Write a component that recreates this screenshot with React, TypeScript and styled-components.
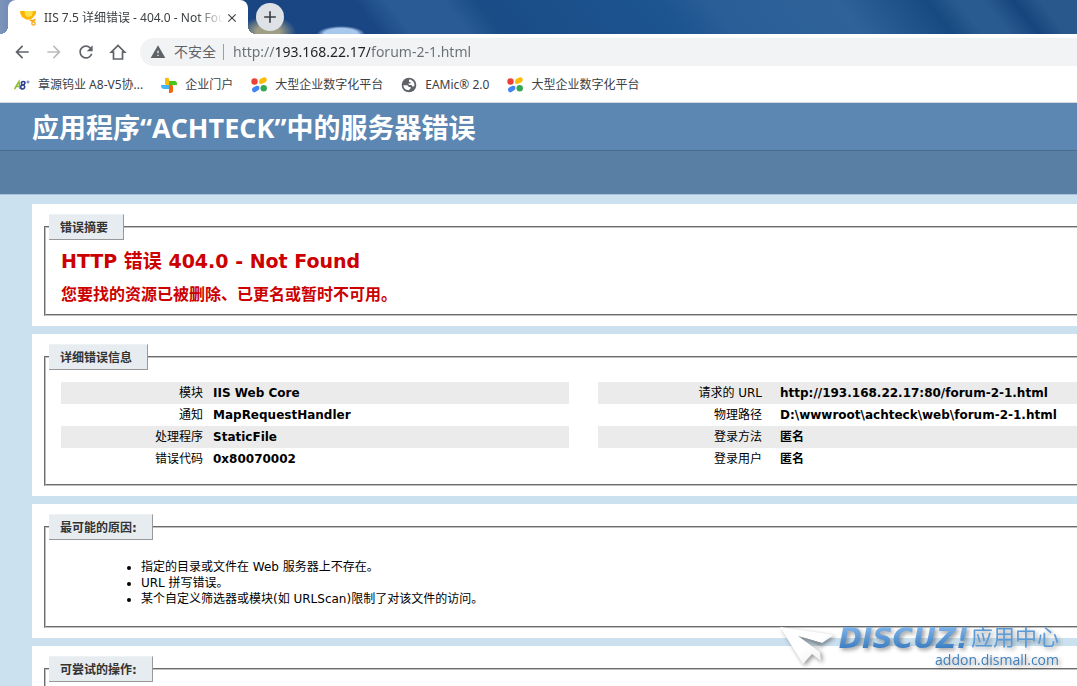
import React from "react";
import styled, { createGlobalStyle } from "styled-components";
import { MdAdd, MdArrowBack, MdArrowForward, MdClose, MdRefresh, MdWarning } from "react-icons/md";

const uiFont = `"Noto Sans", "Noto Sans CJK SC", sans-serif`;
const pageFont = `"DejaVu Sans", "Noto Sans CJK SC", sans-serif`;

const GlobalStyle = createGlobalStyle`
  * { box-sizing: border-box; }
  html, body { height: 100%; }
  #root { height: 100%; }
  body {
    margin: 0;
    overflow: hidden;
    background: #cbe1ef;
    color: #000;
    font: 12px/16px ${pageFont};
  }
`;

const Window = styled.div`
  position: relative;
  min-height: 100%;
  overflow: hidden;
`;

const TabStrip = styled.div`
  display: flex;
  align-items: flex-start;
  height: 34px;
  padding-left: 8px;
  background:
    radial-gradient(ellipse 28px 16px at 268px 32px, #a09d85 40%, transparent),
    radial-gradient(ellipse 24px 8px at 341px 34px, #a9c8ee 70%, transparent),
    linear-gradient(90deg, #7d94bb 0, #6683b0 20px, transparent 60px),
    linear-gradient(52deg, #17437f 0, #1a4784 300px, #2a5b94 325px, #2a5b94 370px, #1a4c86 395px, #1c5590 540px, #2a5e97 580px, #2e6298 680px, #174a80 751px, #2a5b90 775px, #2a5b90 795px, #16457d 819px, #29588c 840px);
`;

const Tab = styled.div`
  position: relative;
  display: flex;
  align-items: center;
  width: 240px;
  height: 34px;
  padding: 1px 8px 0 12px;
  background: #fff;
  border-radius: 8px 8px 0 0;
  &::before,
  &::after {
    content: "";
    position: absolute;
    bottom: 0;
    width: 8px;
    height: 8px;
  }
  &::before {
    right: 100%;
    background: radial-gradient(circle at 0 0, transparent 8px, #fff 8px);
  }
  &::after {
    left: 100%;
    background: radial-gradient(circle at 100% 0, transparent 8px, #fff 8px);
  }
`;

const TabTitle = styled.span`
  flex: 1;
  margin-left: 8px;
  overflow: hidden;
  white-space: nowrap;
  color: #3c4043;
  font: 12px/18px ${uiFont};
  mask-image: linear-gradient(90deg, #000 85%, transparent);
`;

const IconButton = styled.button<{ $size?: number; $fill?: string; $color?: string }>`
  display: flex;
  flex: none;
  align-items: center;
  justify-content: center;
  width: ${(p) => p.$size ?? 32}px;
  height: ${(p) => p.$size ?? 32}px;
  padding: 0;
  border: 0;
  border-radius: 50%;
  background: ${(p) => p.$fill ?? "transparent"};
  color: ${(p) => p.$color ?? "#5f6368"};
`;

const NewTab = styled(IconButton)`
  margin: 3px 0 0 8px;
`;

const Toolbar = styled.div`
  display: flex;
  align-items: center;
  height: 36px;
  padding-left: 6px;
  background: #fff;
`;

const AddressBar = styled.label`
  display: flex;
  flex: 1;
  align-items: center;
  height: 28px;
  margin-left: 6px;
  padding-left: 10px;
  border-radius: 14px 0 0 14px;
  background: #f1f3f4;
  color: #5f6368;
  font: 14px/20px ${uiFont};
`;

const Security = styled.span`
  margin-left: 8px;
  padding-right: 7px;
  border-right: 1px solid #9aa0a6;
  line-height: 16px;
`;

const UrlInput = styled.input`
  flex: 1;
  min-width: 0;
  margin-left: 9px;
  padding: 0;
  border: 0;
  outline: 0;
  background: linear-gradient(90deg, #6b6f74 43px, #202124 43px, #202124 137px, #6b6f74 137px);
  background-clip: text;
  -webkit-text-fill-color: transparent;
  font: inherit;
`;

const Bookmarks = styled.nav`
  display: flex;
  align-items: center;
  gap: 18px;
  height: 33px;
  padding: 0 14px 3px;
  border-bottom: 1px solid #d5d8dc;
  background: #fff;
`;

const Bookmark = styled.a`
  display: flex;
  align-items: center;
  gap: 8px;
  color: #3c4043;
  font: 12px/18px ${uiFont};
  text-decoration: none;
  white-space: nowrap;
  svg { flex: none; }
`;

const Header = styled.header`
  height: 48px;
  padding-left: 32px;
  border-bottom: 1px solid #4a6c8e;
  background: #5c87b2;
`;

const Title = styled.h1`
  margin: 0;
  color: #fff;
  font: bold 27px/50px "Open Sans", "Noto Sans CJK SC", sans-serif;
  white-space: nowrap;
`;

const SubHeader = styled.div`
  height: 44px;
  border-bottom: 1px solid #a9c1d8;
  background: #5a7fa5;
`;

const Content = styled.main`
  display: flex;
  flex-direction: column;
  gap: 8px;
  padding: 9px 0 0 32px;
`;

const Card = styled.section`
  padding: 10px 0 10px 12px;
  background: #fff;
`;

const Group = styled.fieldset<{ $bottom: number }>`
  min-width: 0;
  margin: 0;
  padding: 0 0 ${(p) => p.$bottom}px 3px;
  border: 2px groove #c0c0c0;
  border-right: 0;
`;

const Legend = styled.legend`
  padding: 5px 15px 3px 11px;
  border: 1px solid;
  border-color: #edf2f5 #999 #999;
  border-left: 0;
  background: #e6ecf0;
  color: #333;
  font-weight: bold;
`;

const ErrorTitle = styled.h2`
  margin: 9px 0 0 12px;
  color: #c00;
  font: bold 19px/24px ${pageFont};
`;

const ErrorText = styled.h3`
  margin: 10px 0 0 12px;
  color: #c00;
  font: bold 16px/24px ${pageFont};
`;

const Tables = styled.div`
  display: grid;
  grid-template-columns: 50% 50%;
  column-gap: 29px;
  margin: 12px 0 0 12px;
  overflow: hidden;
`;

const Details = styled.table<{ $label: number; $gap: number }>`
  width: 100%;
  border-collapse: collapse;
  white-space: nowrap;
  tr { height: 22px; }
  tr:nth-child(odd) { background: #ebebeb; }
  th {
    width: ${(p) => p.$label}px;
    padding: 0;
    font-weight: normal;
    text-align: right;
  }
  td {
    padding: 0 0 0 ${(p) => p.$gap}px;
    font-weight: bold;
  }
`;

const Causes = styled.ul`
  margin: 19px 0 0;
  padding-left: 92px;
`;

const Watermark = styled.aside`
  position: absolute;
  top: 622px;
  right: 18px;
  display: flex;
  align-items: flex-start;
  gap: 3px;
  filter: drop-shadow(2px 2px 2px rgba(0, 0, 0, 0.4));
`;

const Brand = styled.div`
  display: flex;
  flex-direction: column;
  align-items: flex-end;
`;

const BrandName = styled.div`
  display: flex;
  align-items: center;
  height: 30px;
  white-space: nowrap;
`;

const Logotype = styled.span`
  margin-right: 2px;
  padding-top: 4px;
  background: linear-gradient(#80b4e8 20%, #3f80c4 80%);
  background-clip: text;
  -webkit-text-fill-color: transparent;
  font: italic bold 28px/30px "DejaVu Sans", sans-serif;
`;

const BrandSuffix = styled.span`
  padding-bottom: 4px;
  color: #5b9bd8;
  font: 22px/30px "Noto Sans CJK SC", sans-serif;
`;

const BrandSite = styled.span`
  color: #3f7fbd;
  font: 14px/16px "Open Sans", sans-serif;
`;

const Trophy = () => (
  <svg width="16" height="16" viewBox="0 0 16 16" aria-hidden="true">
    <path d="M0 1h16v2.500L13.500 7 11 9.500H6L2 7Q0 4 0 1" fill="#ffb400" />
    <path d="M4.500 1h8.500l-1 4.500-4 2-3-2z" fill="#ffdf4a" />
    <path d="M9 10h3.500l3-1.500v2L12 12z" fill="#ffa000" />
    <circle cx="13.500" cy="13.500" r="1.700" fill="#fff6dc" stroke="#f7a41d" strokeWidth="1.200" />
  </svg>
);

const Home = () => (
  <svg width="20" height="20" viewBox="0 0 20 20" fill="none" stroke="currentColor" strokeWidth="1.700" aria-hidden="true">
    <path d="M3.300 10.200 10 3.500l6.700 6.700h-2.200V17h-9v-6.800z" />
  </svg>
);

const A8Mark = () => (
  <svg width="16" height="16" viewBox="0 0 16 16" fill="none" strokeWidth="1.600" aria-hidden="true">
    <path d="M.5 12 5 4.500 6 12M2 9.500h4" stroke="#8fbe2c" />
    <path d="M9.500 4.500c-3 0-2.500 3.300-.5 3.300s3-3.300.5-3.300M9 8c-3 0-3 4-.5 4s3-4 .5-4" stroke="#28408f" />
    <path d="M12.500 5h3M14 3.500v3" stroke="#5b6cad" strokeWidth="1" />
  </svg>
);

const Pinwheel = () => (
  <svg width="16" height="16" viewBox="0 0 16 16" aria-hidden="true">
    <path d="M4 1q4-1 4 1v6H5q-1 0-1-2z" fill="#fbbc05" />
    <path d="M8 4h6q2 0 2 4H8z" fill="#4cc417" />
    <path d="M0 8h8v4H3q-3 0-3-4" fill="#45b5f5" />
    <path d="M8 8h3q1 0 1 2v4q0 2-4 2z" fill="#f4640c" />
  </svg>
);

const Petals = () => (
  <svg width="16" height="16" viewBox="0 0 16 16" aria-hidden="true">
    <circle cx="3.500" cy="4.500" r="3.200" fill="#ea4335" />
    <path d="M8 5q0-3 3-4l2-.8q3 0 2.700 3-.2 2-2.500 2.600L10.500 7Q8 7.500 8 5" fill="#fbbc05" />
    <path d="M1 13q-.2-2.500 2-3l2.500-1.200Q8.500 8 8.500 11q0 2-2.500 3l-2 1.300Q1.500 16 1 13" fill="#4285f4" />
    <circle cx="12.700" cy="11.200" r="3.200" fill="#34a853" />
  </svg>
);

const Globe = () => (
  <svg width="16" height="16" viewBox="0 0 16 16" aria-hidden="true">
    <circle cx="8" cy="8" r="7.300" fill="#5f6368" />
    <path d="M2.300 8.300h3.500q1.800.2 1.800 1.700h2v1.500l-2 1.800Q2.600 13 2.300 8.300M8 2.500q4 .3 5.300 4l.1 2.500-1.800.8-1-1.800H8.300L7 6.500h2.500V5H8z" fill="#fff" />
  </svg>
);

const PaperPlane = () => (
  <svg width="56" height="44" viewBox="0 0 56 44" aria-hidden="true">
    <defs>
      <linearGradient id="wing" x1="0" y1="0" x2="1" y2="1">
        <stop offset="0.500" stopColor="#fff" />
        <stop offset="1" stopColor="#e8eaec" />
      </linearGradient>
    </defs>
    <path d="M0 5 54 13 42 21 18 14 40 30 41 39 32 32 23 42z" fill="url(#wing)" />
    <path d="M18 14 42 21 39 23z" fill="#8b949c" />
  </svg>
);

const bookmarks = [
  { icon: <A8Mark />, label: "章源钨业 A8-V5协..." },
  { icon: <Pinwheel />, label: "企业门户" },
  { icon: <Petals />, label: "大型企业数字化平台" },
  { icon: <Globe />, label: "EAMic® 2.0" },
  { icon: <Petals />, label: "大型企业数字化平台" },
];

const moduleRows = [
  ["模块", "IIS Web Core"],
  ["通知", "MapRequestHandler"],
  ["处理程序", "StaticFile"],
  ["错误代码", "0x80070002"],
];

const requestRows = [
  ["请求的 URL", "http://193.168.22.17:80/forum-2-1.html"],
  ["物理路径", "D:\\wwwroot\\achteck\\web\\forum-2-1.html"],
  ["登录方法", "匿名"],
  ["登录用户", "匿名"],
];

const DetailTable = ({ rows, label, gap }: { rows: string[][]; label: number; gap: number }) => (
  <Details $label={label} $gap={gap}>
    <tbody>
      {rows.map(([name, value]) => (
        <tr key={name}>
          <th scope="row">{name}</th>
          <td>{value}</td>
        </tr>
      ))}
    </tbody>
  </Details>
);

export default function App() {
  return (
    <Window>
      <GlobalStyle />
      <TabStrip>
        <Tab>
          <Trophy />
          <TabTitle>IIS 7.5 详细错误 - 404.0 - Not Found</TabTitle>
          <IconButton $size={16} $color="#3c4043" aria-label="关闭">
            <MdClose size={14} />
          </IconButton>
        </Tab>
        <NewTab $size={28} $fill="#dee1e6" $color="#3c4043" aria-label="新标签页">
          <MdAdd size={20} />
        </NewTab>
      </TabStrip>
      <Toolbar>
        <IconButton aria-label="后退"><MdArrowBack size={20} /></IconButton>
        <IconButton $color="#babcbe" aria-label="前进"><MdArrowForward size={20} /></IconButton>
        <IconButton aria-label="刷新"><MdRefresh size={20} /></IconButton>
        <IconButton aria-label="主页"><Home /></IconButton>
        <AddressBar>
          <MdWarning size={16} />
          <Security>不安全</Security>
          <UrlInput type="text" aria-label="地址" defaultValue="http://193.168.22.17/forum-2-1.html" />
        </AddressBar>
      </Toolbar>
      <Bookmarks>
        {bookmarks.map((b, i) => (
          <Bookmark href="#" key={i}>
            {b.icon}
            {b.label}
          </Bookmark>
        ))}
      </Bookmarks>
      <Header>
        <Title>应用程序“ACHTECK”中的服务器错误</Title>
      </Header>
      <SubHeader />
      <Content>
        <Card>
          <Group $bottom={7}>
            <Legend>错误摘要</Legend>
            <ErrorTitle>HTTP 错误 404.0 - Not Found</ErrorTitle>
            <ErrorText>您要找的资源已被删除、已更名或暂时不可用。</ErrorText>
          </Group>
        </Card>
        <Card>
          <Group $bottom={14}>
            <Legend>详细错误信息</Legend>
            <Tables>
              <DetailTable rows={moduleRows} label={142} gap={10} />
              <DetailTable rows={requestRows} label={164} gap={18} />
            </Tables>
          </Group>
        </Card>
        <Card>
          <Group $bottom={19}>
            <Legend>最可能的原因:</Legend>
            <Causes>
              <li>指定的目录或文件在 Web 服务器上不存在。</li>
              <li>URL 拼写错误。</li>
              <li>某个自定义筛选器或模块(如 URLScan)限制了对该文件的访问。</li>
            </Causes>
          </Group>
        </Card>
        <Card>
          <Group $bottom={20}>
            <Legend>可尝试的操作:</Legend>
          </Group>
        </Card>
      </Content>
      <Watermark>
        <PaperPlane />
        <Brand>
          <BrandName>
            <Logotype>DISCUZ!</Logotype>
            <BrandSuffix>应用中心</BrandSuffix>
          </BrandName>
          <BrandSite>addon.dismall.com</BrandSite>
        </Brand>
      </Watermark>
    </Window>
  );
}
